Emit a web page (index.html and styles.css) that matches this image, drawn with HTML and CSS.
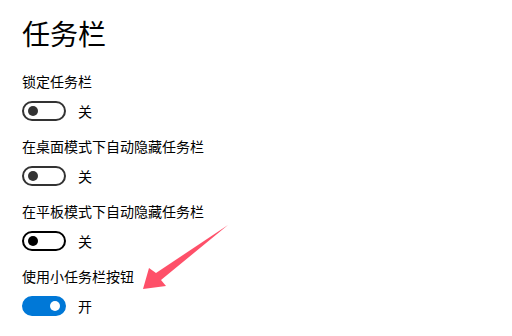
FILE: index.html
```html
<!DOCTYPE html>
<html lang="zh-CN">
<head>
<meta charset="utf-8">
<link rel="stylesheet" href="styles.css">
</head>
<body>
<main class="page">
  <h1 class="title">任务栏</h1>
  <section class="setting">
    <div class="label">锁定任务栏</div>
    <div class="row"><span class="toggle"><span class="knob"></span></span><span class="state">关</span></div>
  </section>
  <section class="setting">
    <div class="label">在桌面模式下自动隐藏任务栏</div>
    <div class="row"><span class="toggle"><span class="knob"></span></span><span class="state">关</span></div>
  </section>
  <section class="setting">
    <div class="label">在平板模式下自动隐藏任务栏</div>
    <div class="row"><span class="toggle dark"><span class="knob"></span></span><span class="state">关</span></div>
  </section>
  <section class="setting">
    <div class="label">使用小任务栏按钮</div>
    <div class="row"><span class="toggle on"><span class="knob"></span></span><span class="state">开</span></div>
  </section>
</main>
<svg class="arrow" width="512" height="336" viewBox="0 0 512 336">
  <polygon points="143,289 149,268 156,273 228,225 161,280 166,286" fill="#fe5069"/>
</svg>
</body>
</html>
```
FILE: styles.css
```css
html, body {
  margin: 0;
  padding: 0;
  background: #fff;
}
body {
  width: 512px;
  height: 336px;
  overflow: hidden;
  position: relative;
  font-family: "Noto Sans CJK SC", "Noto Sans", sans-serif;
  color: #000;
}
.page {
  padding: 13px 0 0 22px;
}
.title {
  margin: 0 0 18px 0;
  font-size: 28px;
  line-height: 40px;
  font-weight: 400;
}
.setting {
  margin-bottom: 15px;
}
.label {
  font-size: 14px;
  line-height: 20px;
  margin-bottom: 10px;
}
.row {
  display: flex;
  align-items: center;
  height: 20px;
}
.toggle {
  box-sizing: border-box;
  width: 44px;
  height: 20px;
  border: 2px solid #333;
  border-radius: 10px;
  display: flex;
  align-items: center;
  padding-left: 4px;
}
.toggle.dark {
  border-color: #000;
}
.knob {
  width: 10px;
  height: 10px;
  border-radius: 50%;
  background: #333;
}
.toggle.dark .knob {
  background: #000;
}
.toggle.on {
  background: #0078d7;
  border-color: #0078d7;
  justify-content: flex-end;
  padding-left: 0;
  padding-right: 4px;
}
.toggle.on .knob {
  background: #fff;
}
.state {
  margin-left: 12px;
  font-size: 14px;
  line-height: 20px;
}
.arrow {
  position: absolute;
  left: 0;
  top: 0;
  pointer-events: none;
}
```
